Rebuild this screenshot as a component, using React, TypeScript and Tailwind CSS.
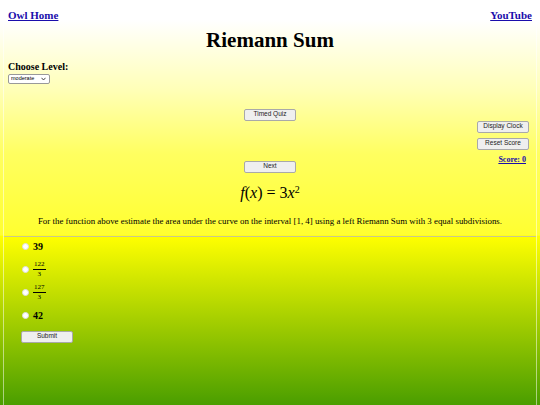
import React, { useState } from 'react';

const btn =
  'h-[12px] w-[52px] rounded-[2px] border border-[#a9a9a9] bg-[#efefef] text-[6.5px] leading-none text-[#222] font-["Liberation_Sans",Arial,sans-serif]';

const Frac: React.FC<{ num: string; den: string }> = ({ num, den }) => (
  <span className="inline-flex flex-col items-center text-[7px] leading-[7px]">
    <span className="border-b-[0.5px] border-black px-[1px] pb-[1px]">{num}</span>
    <span className="pt-[1px]">{den}</span>
  </span>
);

const App: React.FC = () => {
  const [choice, setChoice] = useState<number | null>(null);
  const options = [
    <span className="text-[10px] font-bold">39</span>,
    <Frac num="122" den="3" />,
    <Frac num="127" den="3" />,
    <span className="text-[10px] font-bold">42</span>,
  ];

  return (
    <div className='h-[405px] w-[540px] overflow-hidden bg-[linear-gradient(to_bottom,#ffffff_5%,#ffffb8_22%,#ffff60_38%,#ffff30_58%,#ffff00_58.4%,#4a9e00_100%)] px-[3px] font-["Liberation_Serif","Times_New_Roman",serif] text-black'>
      <div className="h-full border-x border-white/50">
        <div className="flex items-start justify-between px-[4px] pt-[7px]">
          <a href="#" className="text-[11px] font-bold text-[#1a0dab] underline">Owl Home</a>
          <a href="#" className="text-[11px] font-bold text-[#1a0dab] underline">YouTube</a>
        </div>
        <h1 className="mt-[4px] text-center text-[21px] font-bold leading-[24px]">Riemann Sum</h1>

        <div className="mt-[9px] px-[4px]">
          <div className="text-[10px] font-bold leading-[12px]">Choose Level:</div>
          <div className="relative mt-[1px] h-[10px] w-[42px] rounded-[2px] border border-[#999] bg-white">
            <select className='block h-full w-full appearance-none bg-transparent pl-[2px] text-[5.5px] leading-none outline-none font-["Liberation_Sans",Arial,sans-serif]'>
              <option>moderate</option>
            </select>
            <svg className="pointer-events-none absolute right-[3px] top-[2.5px]" width="5" height="4" viewBox="0 0 5 4">
              <path d="M0.5 0.8 L2.5 3 L4.5 0.8" fill="none" stroke="#333" strokeWidth="0.9" />
            </svg>
          </div>
        </div>

        <div className="relative mt-[25px] flex flex-col items-center">
          <button className={btn}>Timed Quiz</button>
          <div className="absolute right-[7px] top-[12px] flex flex-col items-end gap-[5px]">
            <button className={btn}>Display Clock</button>
            <button className={btn}>Reset Score</button>
            <a href="#" className="mr-[3px] text-[8px] font-bold leading-[9px] text-[#1a0dab] underline">Score: 0</a>
          </div>
          <button className={`${btn} mt-[40px]`}>Next</button>
          <div className="mt-[10px] text-[16px] leading-[20px]">
            <i>f</i>(<i>x</i>) = 3<i>x</i><sup className="text-[10px]">2</sup>
          </div>
          <p className="mt-[12px] text-center text-[8.9px] leading-[12px]">
            For the function above estimate the area under the curve on the interval [1, 4] using a left Riemann Sum with 3 equal subdivisions.
          </p>
        </div>

        <hr className="mt-[9px] border-t border-[#c8c890]" />

        <div className="-mt-[2px] flex flex-col px-[18px]">
          {options.map((o, i) => (
            <label key={i} className="flex h-[23px] items-center gap-[4px]">
              <input
                type="radio"
                name="ans"
                checked={choice === i}
                onChange={() => setChoice(i)}
                className="h-[7px] w-[7px] appearance-none rounded-full border border-[#ddd] bg-white"
              />
              {o}
            </label>
          ))}
          <button className={`${btn} mt-[4px] ml-[-1px]`}>Submit</button>
        </div>
      </div>
    </div>
  );
};

export default App;
